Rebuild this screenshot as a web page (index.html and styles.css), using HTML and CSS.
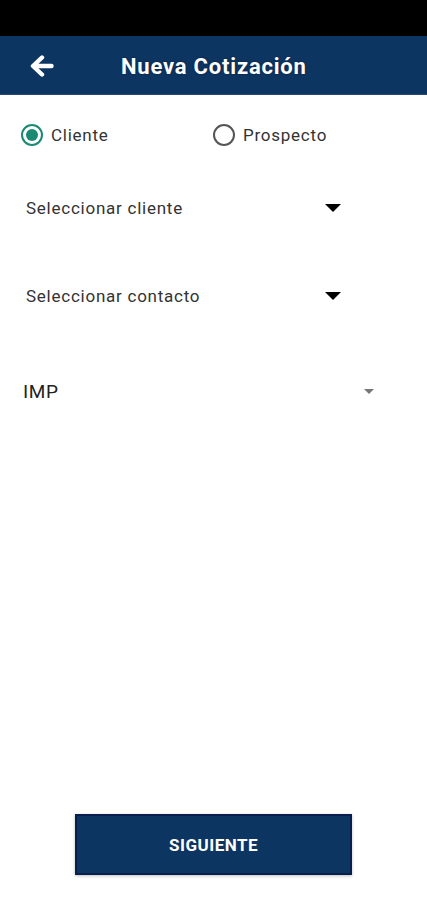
FILE: index.html
```html
<!DOCTYPE html>
<html lang="es">
<head>
<meta charset="utf-8">
<link rel="stylesheet" href="styles.css">
</head>
<body>
<div class="app">
  <div class="statusbar"></div>
  <header class="topbar">
    <svg class="back" width="24" height="22" viewBox="0 0 24 22"><path d="M12 2.5 L3 11 L12 19.5 M3.5 11 H21.5" fill="none" stroke="#fff" stroke-width="4.4" stroke-linecap="round" stroke-linejoin="round"/></svg>
    <h1 class="title">Nueva Cotización</h1>
  </header>
  <main class="content">
    <div class="radios">
      <label class="radio"><span class="dot on"></span><span class="rlabel">Cliente</span></label>
      <label class="radio second"><span class="dot"></span><span class="rlabel">Prospecto</span></label>
    </div>
    <div class="select s1"><span>Seleccionar cliente</span><span class="caret"></span></div>
    <div class="select s2"><span>Seleccionar contacto</span><span class="caret"></span></div>
    <div class="imp"><span>IMP</span><span class="caret small"></span></div>
    <div class="spacer"></div>
    <div class="actions"><button class="btn">SIGUIENTE</button></div>
  </main>
</div>
</body>
</html>
```
FILE: styles.css
```css
* { box-sizing: border-box; }
html, body { margin: 0; padding: 0; background: #fff; }
body { font-family: Roboto, "Noto Sans", sans-serif; color: #333; }
.app { width: 427px; height: 900px; display: flex; flex-direction: column; overflow: hidden; }
.statusbar { height: 36px; background: #000; flex: none; }
.topbar { height: 59px; background: #0d3561; display: flex; align-items: center; flex: none; border-bottom: 1px solid #2a4a75; }
.back { margin-left: 30px; margin-top: 2px; }
.title { margin: 3px 0 0 67px; color: #fff; font-size: 22px; font-weight: 700; text-shadow: 0 0 2px #0a1a3a; letter-spacing: 0.8px; }
.content { flex: 1; display: flex; flex-direction: column; }
.radios { display: flex; align-items: center; margin-top: 28px; height: 24px; }
.radio { display: flex; align-items: center; }
.radio:first-child { margin-left: 21px; width: 192px; }
.dot { width: 22px; height: 22px; border-radius: 50%; border: 2px solid #555; display: flex; align-items: center; justify-content: center; flex: none; }
.dot.on { border-color: #1b8a73; }
.dot.on::after { content: ""; width: 12px; height: 12px; border-radius: 50%; background: #1b8a73; }
.rlabel { font-size: 17px; margin-left: 8px; color: #333; letter-spacing: 0.75px; }
.select { display: flex; align-items: center; justify-content: space-between; width: 315px; margin-left: 26px; font-size: 17px; letter-spacing: 0.75px; color: #333; height: 24px; }
.s1 { margin-top: 49px; }
.s2 { margin-top: 64px; }
.caret { width: 0; height: 0; border-left: 8px solid transparent; border-right: 8px solid transparent; border-top: 8px solid #000; }
.imp { display: flex; align-items: center; justify-content: space-between; width: 351px; margin-left: 23px; margin-top: 71px; font-size: 19px; letter-spacing: 0.6px; color: #222; height: 24px; }
.caret.small { border-left-width: 5px; border-right-width: 5px; border-top: 5px solid #777; }
.spacer { flex: 1; }
.actions { display: flex; justify-content: center; padding-bottom: 25px; }
.btn { width: 277px; height: 61px; background: #0d3561; border: 2px solid #081f4d; color: #fff; font-family: Roboto, sans-serif; font-size: 17px; font-weight: 700; letter-spacing: 0.5px; box-shadow: 0 1px 3px rgba(0,0,0,0.25); }
```
